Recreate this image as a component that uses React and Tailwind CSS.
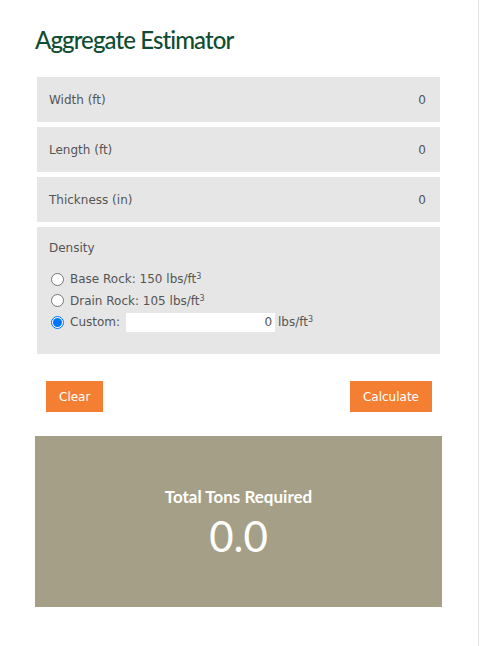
import { useState } from 'react'

function Field({ label, value }) {
  return (
    <div className="flex h-[45px] items-center justify-between bg-[#e5e6e5] pl-3 pr-[14px] text-[12px] text-[#555]">
      <span>{label}</span>
      <span>{value}</span>
    </div>
  )
}

function Radio({ checked }) {
  return (
    <span
      className={`flex h-[13px] w-[13px] items-center justify-center rounded-full border bg-white ${
        checked ? 'border-[#0075ff]' : 'border-[#767676]'
      }`}
    >
      {checked && <span className="h-[9px] w-[9px] rounded-full bg-[#0075ff]" />}
    </span>
  )
}

export default function App() {
  const [density, setDensity] = useState('custom')

  return (
    <div className="min-h-[646px] w-[480px] bg-white" style={{ fontFamily: '"DejaVu Sans", Verdana, sans-serif' }}>
      <div className="flex min-h-[646px] w-[479px] flex-col border-r border-[#e2e2e2] pl-[35px] pr-[36px] pt-[25px]">
        <h1
          className="text-[24px] font-medium leading-[30px] tracking-[-0.9px] text-[#0f4d33]"
          style={{ fontFamily: 'Lato, "Open Sans", sans-serif' }}
        >
          Aggregate Estimator
        </h1>

        <div className="mx-[2px] mt-[22px] flex flex-col gap-[5px]">
          <Field label="Width (ft)" value="0" />
          <Field label="Length (ft)" value="0" />
          <Field label="Thickness (in)" value="0" />

          <div className="flex h-[127px] flex-col bg-[#e5e6e5] pl-3 pt-[14px] text-[12px] text-[#555]">
            <span className="leading-[14px]">Density</span>
            <div className="mt-[17px] flex flex-col gap-[7.5px] pl-[2px]">
              <label className="flex h-[14px] items-center gap-[6px]" onClick={() => setDensity('base')}>
                <Radio checked={density === 'base'} />
                <span>
                  Base Rock: 150 lbs/ft<sup className="text-[8px]">3</sup>
                </span>
              </label>
              <label className="flex h-[14px] items-center gap-[6px]" onClick={() => setDensity('drain')}>
                <Radio checked={density === 'drain'} />
                <span>
                  Drain Rock: 105 lbs/ft<sup className="text-[8px]">3</sup>
                </span>
              </label>
              <label className="flex h-[14px] items-center gap-[6px]" onClick={() => setDensity('custom')}>
                <Radio checked={density === 'custom'} />
                <span>Custom:</span>
                <span className="flex h-[19px] w-[149px] items-center justify-end bg-white pr-[3px]">0</span>
                <span className="-ml-[3px]">
                  lbs/ft<sup className="text-[8px]">3</sup>
                </span>
              </label>
            </div>
          </div>
        </div>

        <div className="ml-[11px] mr-[10px] mt-[27px] flex justify-between">
          <button className="h-[31px] bg-[#f47f32] px-[13px] text-[12px] text-white">Clear</button>
          <button className="h-[31px] bg-[#f47f32] px-[13px] text-[12px] text-white">Calculate</button>
        </div>

        <div
          className="mt-[24px] flex h-[171px] flex-col items-center bg-[#a69f87] pt-[51px] text-white"
          style={{ fontFamily: 'Lato, "Open Sans", sans-serif' }}
        >
          <span className="text-[17px] font-bold leading-[20px]">Total Tons Required</span>
          <span className="mt-[5px] text-[42px] font-normal leading-[48px]">0.0</span>
        </div>
      </div>
    </div>
  )
}
